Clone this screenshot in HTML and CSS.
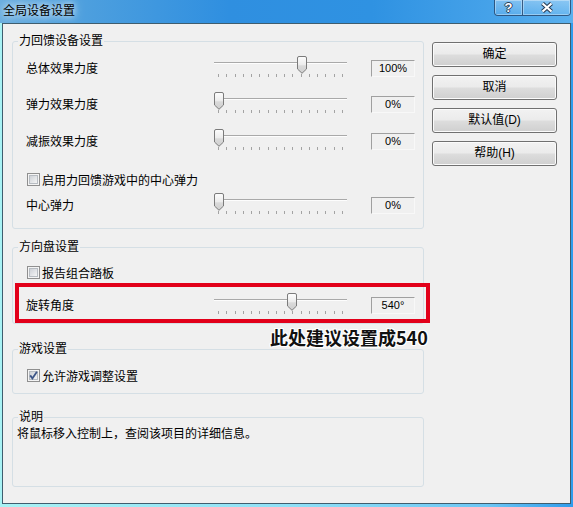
FILE: index.html
```html
<!DOCTYPE html>
<html lang="zh-CN">
<head>
    <meta charset="UTF-8">
    <title>全局设备设置</title>
    <link rel="stylesheet" href="styles.css">
</head>
<body>
    <svg class="defs" width="0" height="0">
        <defs>
            <linearGradient id="thumbFill" x1="0" y1="0" x2="0" y2="1">
                <stop offset="0" stop-color="#fdfdfd"/>
                <stop offset="0.5" stop-color="#ececec"/>
                <stop offset="0.55" stop-color="#dadada"/>
                <stop offset="1" stop-color="#cfcfcf"/>
            </linearGradient>
            <linearGradient id="checkFill" x1="0" y1="0" x2="1" y2="1">
                <stop offset="0" stop-color="#cbcfd5"/>
                <stop offset="1" stop-color="#f7f7f7"/>
            </linearGradient>
        </defs>
    </svg>

    <div class="window">
        <div class="titlebar">
            <span class="title">全局设备设置</span>
            <div class="caption-buttons">
                <div class="caption-btn help-btn">?</div>
                <div class="caption-btn close-btn">
                    <svg width="14" height="11" viewBox="0 0 14 11">
                        <path d="M2.5 1.5 L11.5 9.5 M11.5 1.5 L2.5 9.5" stroke="#2a3e56" stroke-width="4.2"/>
                        <path d="M2.5 1.5 L11.5 9.5 M11.5 1.5 L2.5 9.5" stroke="#fff" stroke-width="2.2"/>
                    </svg>
                </div>
            </div>
        </div>

        <div class="frame">
            <div class="client">
                <div class="left-col">
                    <fieldset class="group group-ff">
                        <legend>力回馈设备设置</legend>
                        <div class="slider-row row-overall">
                            <span class="row-label">总体效果力度</span>
                            <div class="slider">
                                <div class="track"></div>
                                <div class="ticks"></div>
                                <svg class="thumb" style="left: 83px" width="10" height="18" viewBox="0 0 10 18"><path d="M0.5 2 Q0.5 0.5 2 0.5 H8 Q9.5 0.5 9.5 2 V13 L5 17.3 L0.5 13 Z" fill="url(#thumbFill)" stroke="#7b7b7b"/></svg>
                            </div>
                            <div class="value-box">100%</div>
                        </div>
                        <div class="slider-row row-spring">
                            <span class="row-label">弹力效果力度</span>
                            <div class="slider">
                                <div class="track"></div>
                                <div class="ticks"></div>
                                <svg class="thumb" style="left: 0px" width="10" height="18" viewBox="0 0 10 18"><path d="M0.5 2 Q0.5 0.5 2 0.5 H8 Q9.5 0.5 9.5 2 V13 L5 17.3 L0.5 13 Z" fill="url(#thumbFill)" stroke="#7b7b7b"/></svg>
                            </div>
                            <div class="value-box">0%</div>
                        </div>
                        <div class="slider-row row-damper">
                            <span class="row-label">减振效果力度</span>
                            <div class="slider">
                                <div class="track"></div>
                                <div class="ticks"></div>
                                <svg class="thumb" style="left: 0px" width="10" height="18" viewBox="0 0 10 18"><path d="M0.5 2 Q0.5 0.5 2 0.5 H8 Q9.5 0.5 9.5 2 V13 L5 17.3 L0.5 13 Z" fill="url(#thumbFill)" stroke="#7b7b7b"/></svg>
                            </div>
                            <div class="value-box">0%</div>
                        </div>
                        <div class="check-row row-center-enable">
                            <svg class="checkbox" width="13" height="13" viewBox="0 0 13 13"><rect x="0.5" y="0.5" width="12" height="12" fill="#f4f4f4" stroke="#8f8f8f"/><rect x="2.5" y="2.5" width="8" height="8" fill="url(#checkFill)" stroke="#b7bcc2"/></svg>
                            <span>启用力回馈游戏中的中心弹力</span>
                        </div>
                        <div class="slider-row row-center">
                            <span class="row-label">中心弹力</span>
                            <div class="slider">
                                <div class="track"></div>
                                <div class="ticks"></div>
                                <svg class="thumb" style="left: 0px" width="10" height="18" viewBox="0 0 10 18"><path d="M0.5 2 Q0.5 0.5 2 0.5 H8 Q9.5 0.5 9.5 2 V13 L5 17.3 L0.5 13 Z" fill="url(#thumbFill)" stroke="#7b7b7b"/></svg>
                            </div>
                            <div class="value-box">0%</div>
                        </div>
                    </fieldset>

                    <fieldset class="group group-wheel">
                        <legend>方向盘设置</legend>
                        <div class="check-row row-pedals">
                            <svg class="checkbox" width="13" height="13" viewBox="0 0 13 13"><rect x="0.5" y="0.5" width="12" height="12" fill="#f4f4f4" stroke="#8f8f8f"/><rect x="2.5" y="2.5" width="8" height="8" fill="url(#checkFill)" stroke="#b7bcc2"/></svg>
                            <span>报告组合踏板</span>
                        </div>
                        <div class="slider-row row-rotation">
                            <span class="row-label">旋转角度</span>
                            <div class="slider">
                                <div class="track"></div>
                                <div class="ticks"></div>
                                <svg class="thumb" style="left: 73px" width="10" height="18" viewBox="0 0 10 18"><path d="M0.5 2 Q0.5 0.5 2 0.5 H8 Q9.5 0.5 9.5 2 V13 L5 17.3 L0.5 13 Z" fill="url(#thumbFill)" stroke="#7b7b7b"/></svg>
                            </div>
                            <div class="value-box">540°</div>
                        </div>
                    </fieldset>

                    <fieldset class="group group-game">
                        <legend>游戏设置</legend>
                        <div class="check-row row-allow">
                            <svg class="checkbox" width="13" height="13" viewBox="0 0 13 13"><rect x="0.5" y="0.5" width="12" height="12" fill="#f4f4f4" stroke="#8f8f8f"/><rect x="2.5" y="2.5" width="8" height="8" fill="url(#checkFill)" stroke="#b7bcc2"/><path d="M3.2 6.4 L5.4 9.4 L9.9 2.8" fill="none" stroke="#3c5587" stroke-width="1.8"/></svg>
                            <span>允许游戏调整设置</span>
                        </div>
                    </fieldset>

                    <fieldset class="group group-info">
                        <legend>说明</legend>
                        <div class="desc">将鼠标移入控制上，查阅该项目的详细信息。</div>
                    </fieldset>
                </div>

                <div class="right-col">
                    <div class="btn">确定</div>
                    <div class="btn">取消</div>
                    <div class="btn">默认值(D)</div>
                    <div class="btn">帮助(H)</div>
                </div>
            </div>
        </div>

        <!-- annotation drawn over the screenshot -->
        <div class="highlight"></div>
        <div class="note">此处建议设置成540</div>
    </div>

    <script>
        // 16 tick marks under every slider
        document.querySelectorAll('.ticks').forEach(function(ticks) {
            for (var i = 0; i < 16; i++) {
                ticks.appendChild(document.createElement('span'));
            }
        });
    </script>
</body>
</html>
```

FILE: styles.css
```css
body {
    margin: 0;
    font-family: "Liberation Sans", "Noto Sans CJK SC", sans-serif;
    font-size: 12px;
    color: #000;
}

.defs {
    position: absolute;
}

.window {
    position: relative;
    width: 573px;
    height: 507px;
    overflow: hidden;
    display: flex;
    flex-direction: column;
}

.titlebar {
    height: 23px;
    display: flex;
    justify-content: space-between;
    align-items: flex-start;
    background: linear-gradient(to right, #6aaedf 0%, #4d9fde 15%, #2f8fe0 40%, #2f92e2 65%, #48a4ea 88%, #5ab0ee 100%);
}

.title {
    padding: 3px 0 0 3px;
    line-height: 16px;
    text-shadow: 0 0 6px rgba(255, 255, 255, 0.95), 0 0 12px rgba(255, 255, 255, 0.7);
}

.caption-buttons {
    display: flex;
    margin-right: 2px;
    height: 15px;
    border: 1px solid rgba(35, 60, 95, 0.75);
    border-top: none;
    border-radius: 0 0 4px 4px;
    overflow: hidden;
}

.caption-btn {
    display: flex;
    align-items: center;
    justify-content: center;
    background: linear-gradient(rgba(255, 255, 255, 0.3), rgba(255, 255, 255, 0.08));
    box-shadow: inset 0 0 0 1px rgba(255, 255, 255, 0.35);
}

.help-btn {
    width: 27px;
    border-right: 1px solid rgba(35, 60, 95, 0.75);
    color: #fff;
    font-weight: bold;
    font-size: 13px;
    line-height: 15px;
    text-shadow: 1px 0 0 #2a3e56, -1px 0 0 #2a3e56, 0 1px 0 #2a3e56, 0 -1px 0 #2a3e56;
}

.close-btn {
    width: 47px;
}

.frame {
    flex: 1;
    padding: 0 2px 3px 2px;
    background: linear-gradient(to right, #a8f2f4 0%, #8fe0f6 50%, #6cc6f4 85%, #2f9cec 100%);
}

.client {
    height: 100%;
    box-sizing: border-box;
    border: 1px solid #3f5d6e;
    background: #f0f0f0;
    display: flex;
    align-items: flex-start;
    gap: 8px;
    padding: 10px 0 0 9px;
}

.left-col {
    width: 412px;
}

/* group boxes */

.group {
    margin: 0;
    padding: 0;
    min-width: 0;
    border: 1px solid #d5dfe5;
    border-radius: 3px;
}

.group legend {
    margin-left: 5px;
    padding: 0 1px;
    line-height: 14px;
}

.group-ff {
    padding-bottom: 13px;
}

.group-wheel {
    margin-top: 11px;
    padding-bottom: 8px;
}

.group-game {
    margin-top: 18px;
    padding-bottom: 10px;
}

.group-info {
    margin-top: 16px;
}

/* rows */

.slider-row {
    display: flex;
    align-items: center;
    height: 22px;
    padding-left: 13px;
}

.row-label {
    width: 188px;
}

.row-overall { margin-top: 8px; }
.row-spring { margin-top: 14px; }
.row-damper { margin-top: 15px; }
.row-center-enable { margin-top: 20px; }
.row-center { margin-top: 6px; }
.row-pedals { margin-top: 10px; }
.row-rotation { margin-top: 13px; }
.row-allow { margin-top: 11px; }

.slider {
    position: relative;
    width: 133px;
    height: 22px;
}

.track {
    position: absolute;
    left: 0;
    right: 0;
    top: 6px;
    height: 1px;
    background: #a9a9a9;
    border-bottom: 1px solid #fdfdfd;
}

.ticks {
    position: absolute;
    left: 4px;
    width: 125px;
    top: 18px;
    height: 3px;
    display: flex;
    justify-content: space-between;
}

.ticks span {
    width: 1px;
    background: #a3a3a3;
}

.thumb {
    position: absolute;
    top: 0;
}

.value-box {
    margin-left: 24px;
    margin-top: 3px;
    width: 44px;
    height: 17px;
    box-sizing: border-box;
    border: 1px solid;
    border-color: #a0a0a0 #f8f8f8 #f8f8f8 #a0a0a0;
    text-align: center;
    line-height: 15px;
    font-size: 11px;
}

.check-row {
    display: flex;
    align-items: center;
    gap: 2px;
    height: 16px;
    padding-left: 14px;
}

.desc {
    margin: 3px 0 0 4px;
    height: 59px;
    line-height: 14px;
}

/* dialog buttons */

.right-col {
    padding-top: 8px;
}

.btn {
    width: 125px;
    height: 25px;
    box-sizing: border-box;
    margin-bottom: 8px;
    border: 1px solid #707070;
    border-radius: 3px;
    background: linear-gradient(#f2f2f2 0%, #ebebeb 48%, #dddddd 52%, #cfcfcf 100%);
    box-shadow: inset 0 0 0 1px #fbfbfb;
    text-align: center;
    line-height: 23px;
}

/* red annotation */

.highlight {
    position: absolute;
    left: 15px;
    top: 283px;
    width: 415px;
    height: 40px;
    box-sizing: border-box;
    border: 4px solid #e2001a;
}

.note {
    position: absolute;
    left: 270px;
    top: 326px;
    font-family: "Noto Sans CJK SC", sans-serif;
    font-size: 18px;
    font-weight: bold;
    line-height: 22px;
    color: #111;
    text-shadow: 1px 0 0 #fff, -1px 0 0 #fff, 0 1px 0 #fff, 0 -1px 0 #fff,
        1px 1px 0 #fff, -1px -1px 0 #fff, 1px -1px 0 #fff, -1px 1px 0 #fff;
}
```
